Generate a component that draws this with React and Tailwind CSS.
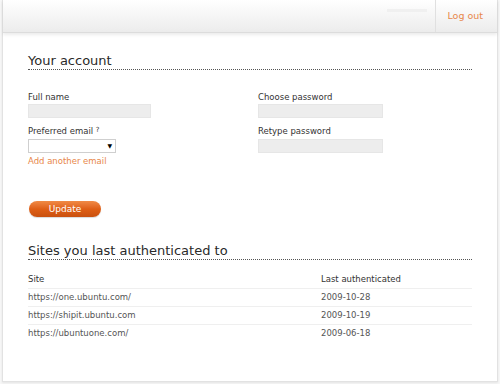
const sites = [
    { url: 'https://one.ubuntu.com/', date: '2009-10-28' },
    { url: 'https://shipit.ubuntu.com', date: '2009-10-19' },
    { url: 'https://ubuntuone.com/', date: '2009-06-18' },
];

function Field({ label, children }) {
    return (
        <div className="flex flex-col">
            <label className="text-[8.5px] leading-[11px] text-[#333]">{label}</label>
            {children}
        </div>
    );
}

export default function App() {
    return (
        <div className="w-[500px] h-[384px] bg-[#f7f7f7] px-[2px] pb-[2px] font-['DejaVu_Sans',Verdana,sans-serif]">
            <div className="h-full flex flex-col border-x border-b border-[#e2e2e2] bg-white shadow-[0_1px_2px_rgba(0,0,0,0.08)]">
                {/* top bar */}
                <div className="h-[33px] flex items-stretch justify-end bg-linear-to-b from-white to-[#ececec] border-b border-[#dcdcdc] shadow-[0_2px_3px_rgba(0,0,0,0.08)]">
                    <div className="flex items-start pt-[9px] pr-[8px]">
                        <div className="w-[40px] h-[3px] bg-[#f0f0f0]" />
                    </div>
                    <div className="flex items-center pl-[11px] pr-[14px] border-l border-[#e0e0e0]">
                        <a className="text-[9.5px] text-[#e8874a] leading-none">Log out</a>
                    </div>
                </div>

                <div className="flex-1 pl-[25px] pr-[25px] pt-[20px]">
                    <h2 className="text-[13px] leading-[16px] text-[#2a2a2a] border-b border-dotted border-[#555]">
                        Your account
                    </h2>

                    <div className="mt-[22px] flex">
                        <div className="w-[230px] flex flex-col">
                            <Field label="Full name">
                                <input className="mt-[1px] w-[123px] h-[14px] bg-[#ededed] border border-[#e6e6e6] outline-none" />
                            </Field>
                            <div className="mt-[8px]">
                                <Field label={<>Preferred email <sup className="text-[7px] relative -top-[2px]">?</sup></>}>
                                    <div className="mt-[2px] w-[88px] h-[14px] bg-white border border-[#cfcfcf] flex items-center justify-end pr-[3px]">
                                        <span className="text-[6px] text-black leading-none">▼</span>
                                    </div>
                                </Field>
                            </div>
                            <a className="mt-[3px] text-[8.5px] leading-[11px] text-[#e8874a]">Add another email</a>
                        </div>
                        <div className="flex flex-col">
                            <Field label="Choose password">
                                <input type="password" className="mt-[1px] w-[125px] h-[14px] bg-[#ededed] border border-[#e6e6e6] outline-none" />
                            </Field>
                            <div className="mt-[8px]">
                                <Field label="Retype password">
                                    <input type="password" className="mt-[2px] w-[125px] h-[14px] bg-[#ededed] border border-[#e6e6e6] outline-none" />
                                </Field>
                            </div>
                        </div>
                    </div>

                    <button className="mt-[34px] ml-[1px] w-[72px] h-[16px] rounded-full bg-linear-to-b from-[#f08a45] via-[#df5f15] to-[#c9500f] text-white text-[9px] leading-none shadow-[0_1px_1px_rgba(0,0,0,0.15)]">
                        Update
                    </button>

                    <h2 className="mt-[24px] text-[13px] leading-[16px] text-[#2a2a2a] border-b border-dotted border-[#555]">
                        Sites you last authenticated to
                    </h2>

                    <div className="mt-[11px] text-[8.5px] text-[#555]">
                        <div className="flex h-[18px] items-center border-b border-[#efefef] text-[#333]">
                            <div className="w-[293px]">Site</div>
                            <div>Last authenticated</div>
                        </div>
                        {sites.map((s, i) => (
                            <div
                                key={s.url}
                                className={`flex h-[18px] items-center ${i < sites.length - 1 ? 'border-b border-[#efefef]' : ''}`}
                            >
                                <div className="w-[293px]">{s.url}</div>
                                <div>{s.date}</div>
                            </div>
                        ))}
                    </div>
                </div>
            </div>
        </div>
    );
}
